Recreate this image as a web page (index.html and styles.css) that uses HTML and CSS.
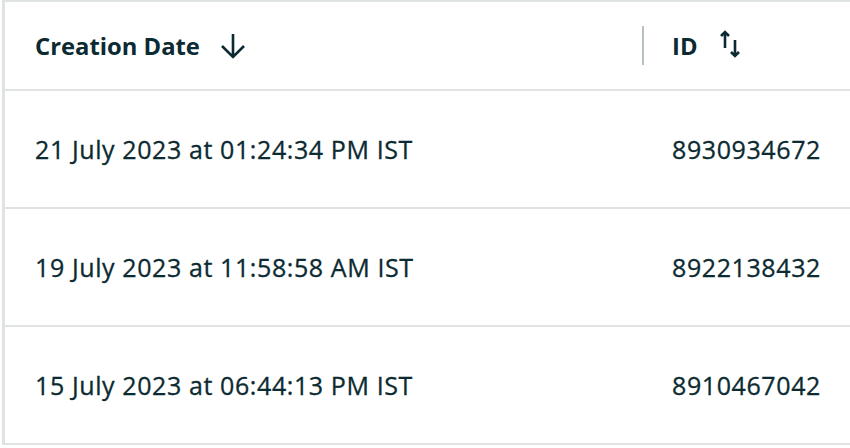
FILE: index.html
```html
<!DOCTYPE html>
<html>
<head>
<meta charset="utf-8">
<link rel="stylesheet" href="styles.css">
</head>
<body>
<div class="table">
  <div class="row head">
    <div class="cell c1">
      <span class="htext">Creation Date</span>
      <svg class="ico-down" width="28" height="28" viewBox="0 0 28 28"><path d="M14 2 V25 M3 14 L14 25 L25 14" fill="none" stroke="#0c2a31" stroke-width="2.6" stroke-linejoin="miter"/></svg>
    </div>
    <div class="cell c2">
      <span class="sep"></span>
      <span class="htext">ID</span>
      <svg class="ico-sort" width="24" height="30" viewBox="0 0 24 30"><path d="M5 3 V19 M1 7 L5 3 L9 7" fill="none" stroke="#0c2a31" stroke-width="2.6"/><path d="M15 11 V27 M11 23 L15 27 L19 23" fill="none" stroke="#0c2a31" stroke-width="2.6"/></svg>
    </div>
  </div>
  <div class="row">
    <div class="cell c1">21 July 2023 at 01:24:34 PM IST</div>
    <div class="cell c2">8930934672</div>
  </div>
  <div class="row">
    <div class="cell c1">19 July 2023 at 11:58:58 AM IST</div>
    <div class="cell c2">8922138432</div>
  </div>
  <div class="row">
    <div class="cell c1">15 July 2023 at 06:44:13 PM IST</div>
    <div class="cell c2">8910467042</div>
  </div>
</div>
</body>
</html>
```
FILE: styles.css
```css
html, body { margin: 0; padding: 0; background: #fff; }
body {
  font-family: "Open Sans", "Noto Sans", sans-serif;
  color: #0c2a31;
  overflow: hidden;
  width: 850px;
  height: 448px;
}
.table {
  margin-left: 2px;
  border-left: 3px solid #dfe3e3;
  border-top: 2px solid #dfe3e3;
  width: 845px;
  overflow: hidden;
}
.row {
  display: flex;
  height: 116px;
  border-bottom: 2px solid #dfe3e3;
  align-items: center;
}
.row.head { height: 87px; }
.cell {
  display: flex;
  align-items: center;
  font-size: 25px;
  font-weight: 500;
  letter-spacing: 0.6px;
  -webkit-text-stroke: 0.3px #0c2a31;
  height: 100%;
  white-space: nowrap;
}
.c1 { width: 637px; flex: none; padding-left: 30px; box-sizing: border-box; }
.c2 { flex: none; }
.head .cell { font-size: 23.8px; letter-spacing: 0; -webkit-text-stroke: 0; }
.head .htext { font-weight: 700; }
.ico-down { margin-left: 19px; }
.sep {
  width: 2px;
  height: 39px;
  background: #b9c0c0;
  margin-right: 28px;
}
.row:not(.head) .c2 { padding-left: 30px; }
.ico-sort { margin-left: 22px; margin-top: -4px; }
```
